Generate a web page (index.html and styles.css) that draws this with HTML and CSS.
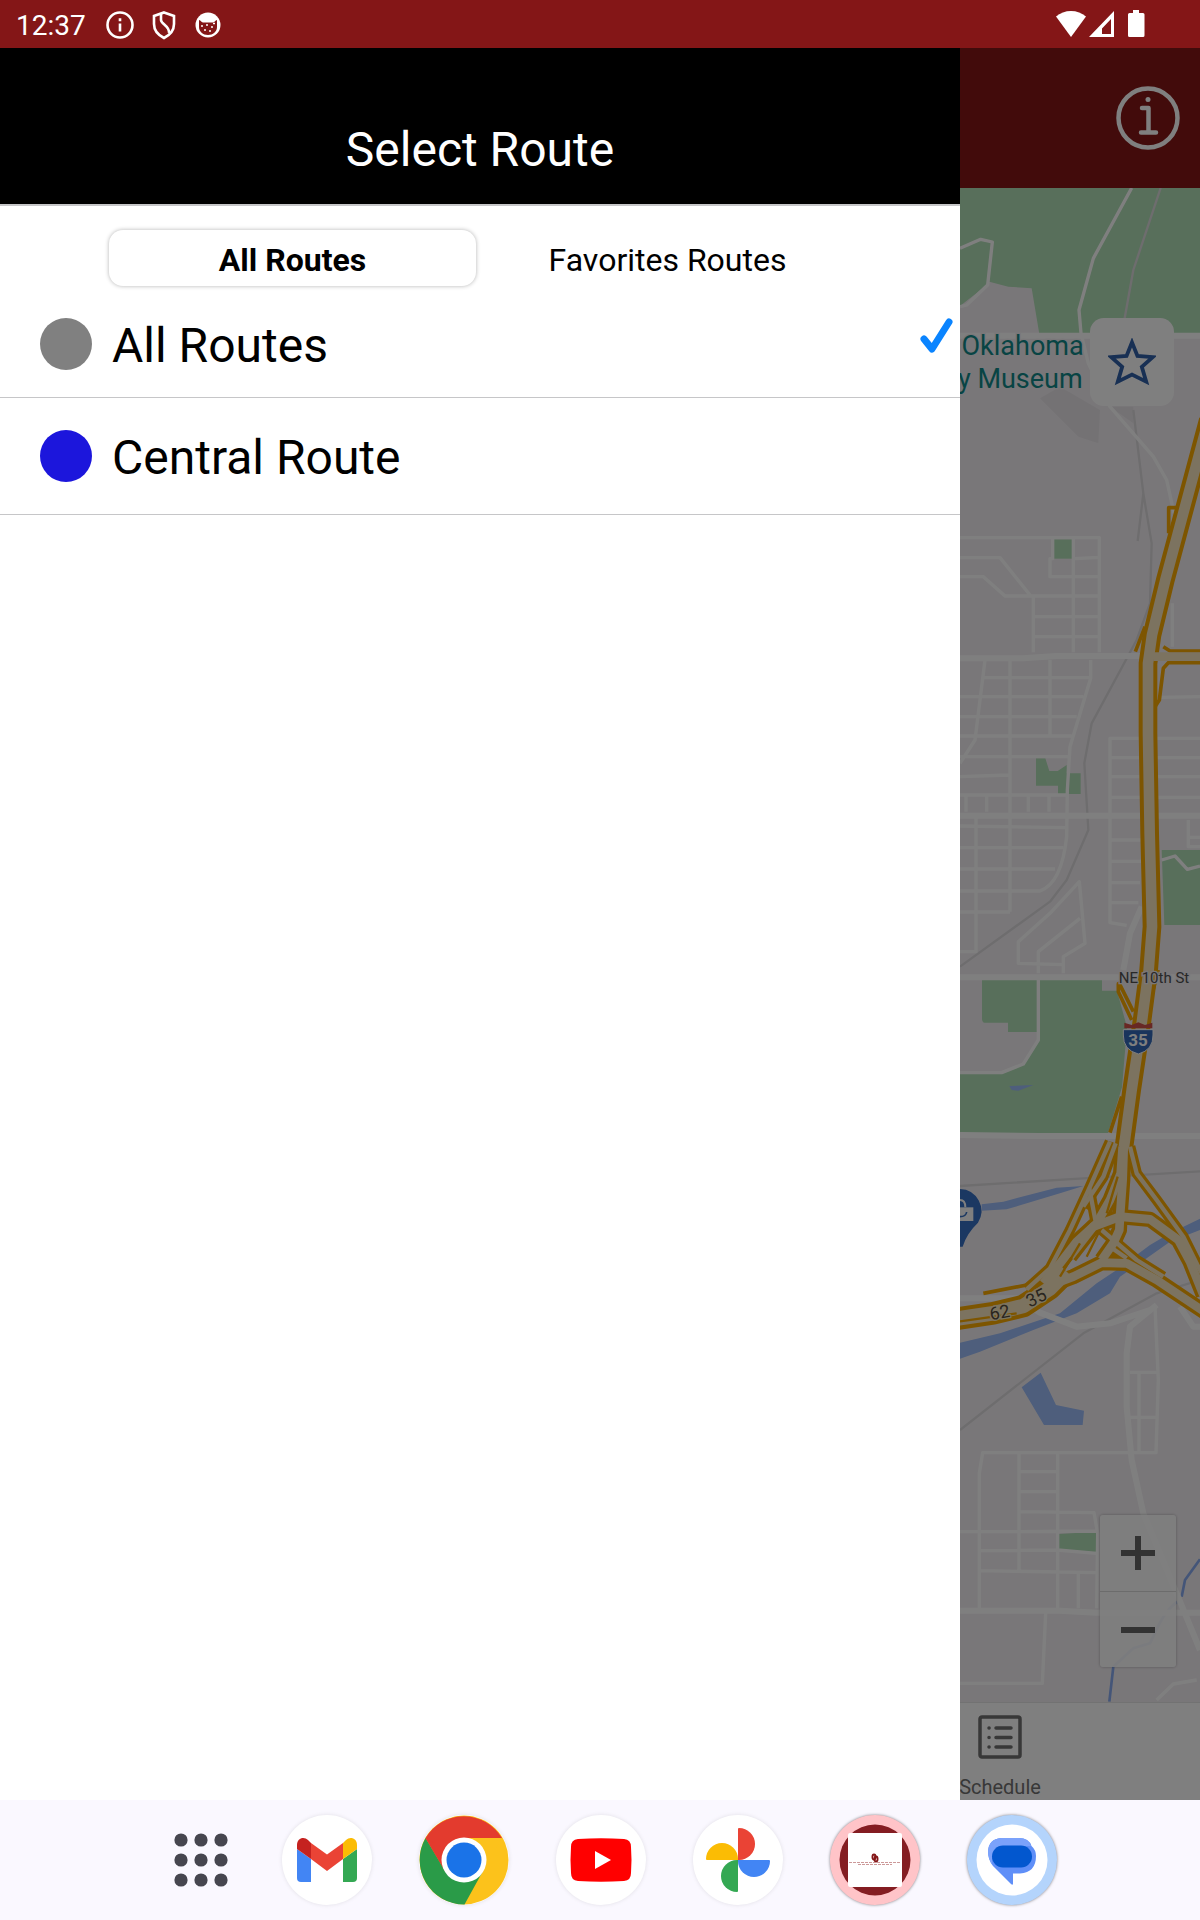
FILE: index.html
```html
<!DOCTYPE html>
<html lang="en">
<head>
  <meta charset="UTF-8">
  <meta name="viewport" content="width=device-width, initial-scale=1">
  <title>Select Route</title>
  <link rel="stylesheet" href="styles.css">
</head>
<body>

  <!-- Status bar -->
  <div class="status-bar">
    <span class="clock">12:37</span>
    <svg class="status-icon" viewBox="0 0 30 30" fill="none" stroke="#fff">
      <circle cx="15" cy="15" r="12.5" stroke-width="2.6"/>
      <path d="M15 13.5v8M15 8.2v3" stroke-width="2.6"/>
    </svg>
    <svg class="status-icon" viewBox="0 0 30 30" fill="none" stroke="#fff" stroke-width="2.6">
      <path d="M15 2.5 25 6v8c0 6.500-4 11-10 14C9 25 5 20.500 5 14V6z"/>
      <path d="M12 4v6c0 4 9 6 8 13"/>
    </svg>
    <svg class="status-icon" viewBox="0 0 30 30">
      <circle cx="15" cy="15" r="12.500" fill="#fff"/>
      <path d="M6 10c2 0 2 2.500 4 2.500h10c2 0 2-2.500 4-2.500v7c0 4.500-4 8-9 8s-9-3.500-9-8z" fill="#841617"/>
      <path d="M8 16h2M13 15h2M18 17h2M11 20h2M16 21h2M20 13.500h2" stroke="#fff" stroke-width="1.400"/>
    </svg>
    <svg class="signal" viewBox="0 0 90 30" fill="#fff">
      <path d="M0 6.500C8-1 22-1 30 6.500L15 27z"/>
      <path d="M58 1v26H33zM55 9 46 18.500V24h9z" fill-rule="evenodd"/>
      <path d="M77 0h6v3h4q1.500 0 1.500 1.500v21q0 1.500-1.500 1.500H73.500q-1.500 0-1.500-1.500v-21Q72 3 73.500 3H77z"/>
    </svg>
  </div>

  <div class="stage">

    <!-- Map screen, under the drawer -->
    <main class="screen">
      <header class="app-header">
        <button class="info-btn" aria-label="Info">
          <svg viewBox="0 0 64 64" fill="none" stroke="#fff" stroke-linecap="round" stroke-linejoin="round" stroke-width="4.500">
            <circle cx="32" cy="32" r="29.500"/>
            <path d="M26 22h6.500v24M25 46.500h15"/>
            <circle cx="32" cy="13.500" r="2.500" fill="#fff" stroke="none"/>
          </svg>
        </button>
      </header>

      <div class="map">
        <svg class="map-canvas" viewBox="30 24 720 4542">
          <defs>
            <g id="highway">
              <path d="M775 720 646 1200 606 1365 594 1450 594 1660 599 1960 606 2240 596 2370 575 2530 545 2730 522 2900"/>
            </g>
            <g id="branches">
              <path d="M522 2880 518 3000 510 3110 508 3150 490 3190 455 3240"/>
              <path d="M518 2900 512 2980 480 3060 440 3130 380 3185 330 3250 280 3310"/>
              <path d="M360 3230 430 3140 510 3110 600 3118 685 3180 720 3245 760 3345"/>
              <path d="M290 3320 370 3290 455 3248 530 3250 620 3300 770 3400"/>
            </g>
            <g id="trunk">
              <path d="M20 3416 130 3400 220 3378 300 3325 350 3275"/>
            </g>
            <g id="ramps">
              <path d="M480 2885 420 3020 360 3150 300 3265 230 3328"/>
              <path d="M497 2890 460 2990 400 3080"/>
              <path d="M540 2900 560 2980 620 3060 700 3170 760 3290"/>
              <path d="M418 3025 436 3120M455 3150 560 3240 640 3290M480 3200 530 3235"/>
            </g>
          </defs>

          <!-- Parks -->
          <g class="park">
            <path d="M30 24H750V462H268L245 325 175 320 118 305 108 317 30 378z"/>
            <path d="M308 1078h62v58h-62z"/>
            <path d="M258 1735h28l12 38h25l27-18v25h42v62h-68v-25h-66z"/>
            <path d="M635 2010h115v225H643z"/>
            <path d="M96 2400H456v32h45l30 110-15 180-42 138H30v-178h120l70-30 42-72v-24h-88v-28h-70q-8 0-8-12z"/>
            <path d="M327 4062 440 4055 443 4118 327 4110z"/>
          </g>
          <path class="plain" d="M30 2400H96V2518q0 12 8 12h70v28h88v24L220 2652 150 2682H30z"/>
          <path class="shade" d="M270 655 330 620 450 690 445 790 385 770zM480 680h70v50z"/>

          <!-- Water -->
          <g class="water">
            <path d="M30 3488 150 3460 330 3400 440 3310 500 3270 600 3195 660 3160 750 3116V3150L660 3185 590 3235 510 3290 480 3340 380 3400 250 3450 90 3515 30 3536z"/>
            <path d="M95 3073 160 3065 320 3023 400 3018 330 3040 170 3088 95 3092z"/>
            <path d="M178 2718 250 2715 205 2732 185 2730z"/>
            <path d="M215 3622 272 3578 318 3675 402 3692 398 3735H282z"/>
          </g>
          <path class="creek" d="M750 4138 705 4200 695 4250M490 4460 478 4565"/>
          <path class="creek faint" d="M690 4260C640 4290 620 4350 600 4390L550 4405 490 4460"/>

          <!-- Rail lines -->
          <path class="rail" d="M632 24 550 270 523 420M550 690 580 940 563 1083M580 940 605 1090 600 1270 560 1380 425 1630 403 1750 415 1950 350 2100 300 2165 30 2360M30 3018 400 2995 750 2974M750 3300 620 3340 400 3460 30 3750"/>

          <!-- Streets -->
          <path class="road" d="M30 205 92 178 127 186 113 315 50 375 30 380M545 24 430 235 387 390 393 460 415 550 480 680 610 830 650 900 672 1000"/>
          <g class="street">
            <path d="M30 1073H448V1417M308 1078V1136H300V1190H448M30 1133H150L240 1245M370 1078V1417M375 1136 448 1132M30 1190H100L165 1248H448M250 1248V1417M250 1310H448M250 1370H448M667 1270V1400"/>
            <path d="M105 1440 75 1680 30 1750M180 1440V2195M300 1440V1665M422 1440V1495L360 1700 352 1830 350 1970Q335 2110 270 2133H30M100 1493H422M30 1550H400M30 1610H380M30 1668H365M30 1730H355M30 1790 180 1785M30 1845H352M48 1845V1895M110 1845V1895M235 1845V1895M297 1845V1895M30 1938 350 1943M30 2003H340M30 2067H315M30 2196H180M78 1910V2315H30"/>
            <path d="M750 1550 630 1552M750 1675H480V2228L530 2236M480 1733H750M480 1790H750M480 1852H750M480 1980H575M480 2044H575M480 2108H570M480 2168H565M715 1920V2000H750M715 1972H750"/>
            <path d="M265 2380V2315L390 2215M340 2380V2330L405 2290 388 2105 300 2200 205 2285V2350L340 2354"/>
            <path d="M615 3380 625 3600 618 3818H98L88 3880V4285M540 3577H625M567 3577V3818M540 3712H625M207 3818V4170M323 3818V4285M207 3875H323M207 3935H323M207 3995 432 3998 443 4060 440 4285M30 4055H207L440 4053M88 4112 323 4110 440 4120M88 4172 440 4178M385 4178V4285M287 4300 277 4510H30M620 4560 670 4512 740 4500"/>
          </g>
          <path class="road" d="M265 2385V2580L220 2652 155 2678H30M635 2040 675 2028 712 2068 750 2058"/>
          <path class="avenue" d="M30 467H420M670 467H750M30 1435H220L320 1428H575M30 1907H750M30 2392H750M30 2865 270 2868H750M575 2180 540 2260 520 2370M30 3355H200L270 3398 380 3440 480 3430 600 3390M620 3375 540 3440 530 3520V3680L545 3840 580 4000 680 4240 750 4410M690 3380 730 3440H750M30 4292H330L440 4298H750"/>

          <!-- Highways: casing first, then the fill -->
          <g class="casing">
            <path d="M680 983H656V1060M585 1340 556 1415M640 1400 660 1413H760M760 1448H655L640 1465 628 1560 615 1580" class="ramp"/>
            <path d="M505 2405 550 2495M505 2410V2435L545 2520M625 2370 600 2465M515 2750 480 2858M100 3340 230 3315 300 3260" class="ramp"/>
            <use href="#ramps" class="ramp-wide"/>
            <use href="#branches" class="branch"/>
            <use href="#trunk" class="trunk"/>
            <use href="#highway" class="main"/>
          </g>
          <g class="fill">
            <path d="M610 1430H770" class="link"/>
            <use href="#ramps" class="ramp-wide"/>
            <use href="#branches" class="branch"/>
            <use href="#trunk" class="trunk"/>
            <use href="#highway" class="main"/>
          </g>
          <path class="median" d="M503 2990 470 3100M390 3190 330 3290M450 3150 410 3230M30 3424 200 3400"/>

          <!-- Interstate shield -->
          <path d="M523 2528 545 2535 565 2527 585 2535 607 2528V2545H523z" fill="#d05048"/>
          <path d="M520 2549H609V2565Q610 2610 565 2622 519 2610 520 2565z" fill="#3468b8" stroke="#fff" stroke-width="3"/>
          <text class="shield-text" x="564" y="2598">35</text>

          <!-- Shopping pin -->
          <path d="M30 3027A66 66 0 0 1 84 3128Q50 3160 38 3200H30z" fill="#3670c4"/>
          <path d="M30 3082H70V3123H30z" fill="#fff"/>
          <path d="M30 3060Q46 3060 46 3082" fill="none" stroke="#fff" stroke-width="6"/>
          <path d="M30 3110Q48 3110 50 3096" fill="none" stroke="#3670c4" stroke-width="5"/>

          <!-- Labels -->
          <text class="place" x="401" y="525">Oklahoma</text>
          <text class="place" x="398" y="624">y Museum</text>
          <text class="street-name" x="612" y="2410">NE 10th St</text>
          <text class="route-no" x="149" y="3416" transform="rotate(-10 149 3396)">62</text>
          <text class="route-no" x="258" y="3372" transform="rotate(-26 258 3352)">35</text>
        </svg>

        <button class="favorite-btn" aria-label="Favorite">
          <svg viewBox="0 0 44 44" fill="none" stroke="#3060a8" stroke-width="3.500">
            <path d="M22 4 27 16.500 41 17.500 31 26.500 35 40 22 33.500 9 40 13 26.500 3 17.500 17 16.500z"/>
          </svg>
        </button>

        <div class="zoom">
          <button aria-label="Zoom in">
            <svg viewBox="0 0 34 34"><path d="M17 0v34M0 17h34"/></svg>
          </button>
          <button aria-label="Zoom out">
            <svg viewBox="0 0 34 34"><path d="M0 17h34"/></svg>
          </button>
        </div>
      </div>

      <nav class="tab-bar">
        <a class="tab" href="#schedule">
          <svg viewBox="0 0 44 44" fill="none" stroke="#707070" stroke-width="3.500" stroke-linecap="round">
            <rect x="2" y="2" width="40" height="40" rx="2"/>
            <path d="M18 13h15M18 22.500h15M18 32h15M11 13h.1M11 22.500h.1M11 32h.1"/>
          </svg>
          Schedule
        </a>
      </nav>
    </main>

    <div class="scrim"></div>

    <!-- Route drawer -->
    <aside class="drawer">
      <h1>Select Route</h1>
      <div class="segments">
        <button class="segment active">All Routes</button>
        <button class="segment">Favorites Routes</button>
      </div>
      <ul class="routes">
        <li class="route">
          <span class="dot gray"></span>
          <span class="route-name">All Routes</span>
          <svg class="check" viewBox="0 0 34 36" fill="none" stroke="#0a84ff" stroke-width="7" stroke-linecap="round" stroke-linejoin="round">
            <path d="M5 21 13 31 30 4"/>
          </svg>
        </li>
        <li class="route">
          <span class="dot blue"></span>
          <span class="route-name">Central Route</span>
        </li>
      </ul>
    </aside>
  </div>

  <!-- Taskbar -->
  <nav class="dock">
    <button class="all-apps" aria-label="All apps">
      <svg viewBox="0 0 54 54" fill="#46464f">
        <circle cx="7" cy="7" r="6.600"/><circle cx="27" cy="7" r="6.600"/><circle cx="47" cy="7" r="6.600"/>
        <circle cx="7" cy="27" r="6.600"/><circle cx="27" cy="27" r="6.600"/><circle cx="47" cy="27" r="6.600"/>
        <circle cx="7" cy="47" r="6.600"/><circle cx="27" cy="47" r="6.600"/><circle cx="47" cy="47" r="6.600"/>
      </svg>
    </button>
    <button class="app" aria-label="Gmail">
      <svg viewBox="0 0 90 90">
        <path d="M15 34 29 44V67H19q-4 0-4-4z" fill="#4285f4"/>
        <path d="M75 34 61 44V67H71q4 0 4-4z" fill="#34a853"/>
        <path d="M29 28 45 39.500 61 28V44L45 56 29 44z" fill="#ea4335"/>
        <path d="M15 30c0-7 7-9 11-5l3 3v16L15 34z" fill="#c5221f"/>
        <path d="M75 30c0-7-7-9-11-5l-3 3v16l14-10z" fill="#fbbc04"/>
      </svg>
    </button>
    <button class="app" aria-label="Chrome">
      <svg viewBox="0 0 90 90">
        <circle cx="45" cy="45" r="44.500" fill="#fcc21b"/>
        <path d="M45 45 26 56 6.500 23A44.500 44.500 0 0 1 83 23z" fill="#e33b2e"/>
        <path d="M6.500 23A44.500 44.500 0 0 0 45.500 89.500L64 56 45 45 26 56z" fill="#2a9b48"/>
        <path d="M6.500 23 26 56 45 45z" fill="#e33b2e"/>
        <path d="M45 23H83L64 56 45 45z" fill="#fcc21b"/>
        <circle cx="45" cy="45" r="22.500" fill="#fff"/>
        <circle cx="45" cy="45" r="17.500" fill="#1a73e8"/>
      </svg>
    </button>
    <button class="app" aria-label="YouTube">
      <svg viewBox="0 0 90 90">
        <path d="M22 24Q45 22.500 68 24 75 24.500 75 32 76 45 75 58 75 65.500 68 66 45 67.500 22 66 15 65.500 15 58 14 45 15 32 15 24.500 22 24z" fill="#f00"/>
        <path d="M39 36v18l16-9z" fill="#fff"/>
      </svg>
    </button>
    <button class="app" aria-label="Photos">
      <svg viewBox="0 0 90 90">
        <path d="M45 45V14q0-1 1-1a16 16 0 0 1 0 32z" fill="#ea4335"/>
        <path d="M45 45H76q1 0 1 1a16 16 0 0 1-32 0z" fill="#4285f4"/>
        <path d="M45 45V76q0 1-1 1a16 16 0 0 1 0-32z" fill="#34a853"/>
        <path d="M45 45H14q-1 0-1-1a16 16 0 0 1 32 0z" fill="#fbbc04"/>
      </svg>
    </button>
    <button class="app ringed pink" aria-label="Route tracker">
      <svg viewBox="0 0 90 90">
        <circle cx="45" cy="45" r="35.500" fill="#841d22"/>
        <rect x="18" y="18" width="54" height="54" rx="2" fill="#fff"/>
        <g fill="none" stroke="#841617" stroke-width="1.800">
          <ellipse cx="44" cy="42" rx="1.600" ry="2.500"/>
          <ellipse cx="46" cy="44" rx="1.600" ry="2.500"/>
        </g>
        <path d="M19 47.500h52M28 49.500h34" stroke="#c99" stroke-width="1" stroke-dasharray="3 1"/>
      </svg>
    </button>
    <button class="app ringed sky" aria-label="Messages">
      <svg viewBox="0 0 90 90">
        <circle cx="45" cy="45" r="35.500" fill="#fff"/>
        <path d="M34 23H52Q62 23 64.500 31 69 35 69 41 69 57.500 53 58.500H46V69Q45.500 70.500 44 69L26 51Q21 45 21 36 22 24 34 23z" fill="#5f8ff8"/>
        <path d="M34 23H52Q61 23 64 31H36Q26 32 25 42V49Q21 44 21 36 22 24 34 23z" fill="#7ba2fb"/>
        <rect x="25" y="30.500" width="40" height="22" rx="11" fill="#0257cf"/>
      </svg>
    </button>
  </nav>

</body>
</html>
```

FILE: styles.css
```css
* {
  box-sizing: border-box;
}
body {
  margin: 0;
  min-height: 100vh;
  display: flex;
  flex-direction: column;
  font-family: Roboto, Arial, sans-serif;
  color: #000;
  background: #fff;
}
button {
  padding: 0;
  border: none;
  background: none;
  font: inherit;
  color: inherit;
  cursor: pointer;
}
svg {
  display: block;
}

/* Status bar */
.status-bar {
  display: flex;
  align-items: center;
  gap: 14px;
  height: 48px;
  padding: 2px 54px 0 16px;
  background: #841617;
  color: #fff;
}
.clock {
  margin-right: 5px;
  font-size: 28px;
}
.status-icon {
  width: 30px;
  height: 30px;
}
.signal {
  width: 90px;
  height: 30px;
  margin-left: auto;
}

/* Map screen */
.stage {
  position: relative;
  flex: 1;
  display: flex;
}
.screen {
  flex: 1;
  display: flex;
  flex-direction: column;
}
.app-header {
  display: flex;
  align-items: center;
  justify-content: flex-end;
  height: 140px;
  padding: 0 20px;
  background: #841617;
}
.info-btn {
  width: 64px;
  height: 64px;
}
.map {
  position: relative;
  flex: 1;
  min-height: 800px;
  overflow: hidden;
  background: #f3eff3;
}
.map-canvas {
  position: absolute;
  top: 0;
  right: 0;
  width: 240px;
  height: 1514px;
}
.park {
  fill: #b0deb6;
}
.plain {
  fill: #f3eff3;
}
.shade {
  fill: #e9e5e9;
}
.water {
  fill: #9cbcf8;
}
.creek, .rail, .road, .street, .avenue, .casing, .fill, .median {
  fill: none;
  stroke-linejoin: round;
}
.creek {
  stroke: #88aaf0;
  stroke-width: 8;
}
.creek.faint {
  stroke: #c8d4f4;
}
.rail {
  stroke: #dcdadd;
  stroke-width: 7;
}
.road {
  stroke: #fff;
  stroke-width: 10;
}
.street {
  stroke: #fff;
  stroke-width: 10;
}
.avenue {
  stroke: #fff;
  stroke-width: 18;
}
.casing, .median {
  stroke: #fbaa00;
}
.fill {
  stroke: #f8e6c0;
}
.median { stroke-width: 7; }
.casing .ramp { stroke-width: 11; }
.casing .ramp-wide { stroke-width: 32; }
.casing .branch { stroke-width: 46; }
.casing .main { stroke-width: 56; }
.casing .trunk { stroke-width: 68; }
.fill .link { stroke-width: 26; }
.fill .ramp-wide { stroke-width: 13; }
.fill .branch { stroke-width: 26; }
.fill .main { stroke-width: 32; }
.fill .trunk { stroke-width: 44; }
.place {
  font-size: 81px;
  fill: #108888;
  text-anchor: end;
  stroke: #f3eff3;
  stroke-width: 8;
  paint-order: stroke;
}
.street-name {
  font-size: 45px;
  fill: #505050;
  text-anchor: middle;
  stroke: #f3eff3;
  stroke-width: 8;
  paint-order: stroke;
}
.route-no {
  font-size: 54px;
  fill: #554c40;
  text-anchor: middle;
  stroke: #fbe9bc;
  stroke-width: 8;
  paint-order: stroke;
}
.shield-text {
  font-size: 51px;
  font-weight: bold;
  fill: #fff;
  text-anchor: middle;
}
.favorite-btn {
  position: absolute;
  top: 130px;
  right: 26px;
  display: flex;
  align-items: center;
  justify-content: center;
  width: 84px;
  height: 88px;
  border-radius: 14px;
  background: #fff;
}
.favorite-btn svg {
  width: 48px;
  height: 48px;
}
.zoom {
  position: absolute;
  right: 24px;
  bottom: 35px;
  border-radius: 3px;
  background: rgba(255, 255, 255, 0.8);
  box-shadow: 0 0 3px rgba(0, 0, 0, 0.3);
}
.zoom button {
  display: flex;
  align-items: center;
  justify-content: center;
  width: 76px;
  height: 76px;
}
.zoom button + button {
  border-top: 1px solid #d8d8d8;
}
.zoom svg {
  width: 34px;
  height: 34px;
  stroke: #666;
  stroke-width: 6;
}
.tab-bar {
  display: grid;
  grid-template-columns: repeat(3, 1fr);
  height: 98px;
  border-top: 1px solid #e4e4e4;
  background: #fff;
}
.tab {
  grid-column: 3;
  display: flex;
  flex-direction: column;
  align-items: center;
  justify-content: space-between;
  padding-top: 12px;
  font-size: 20px;
  line-height: 26px;
  color: #707070;
  text-decoration: none;
}
.tab svg {
  width: 44px;
  height: 44px;
}
.scrim {
  position: absolute;
  inset: 0;
  background: rgba(0, 0, 0, 0.5);
}

/* Drawer */
.drawer {
  position: absolute;
  top: 0;
  bottom: 0;
  left: 0;
  width: 80%;
  background: #fff;
}
.drawer h1 {
  margin: 0;
  padding: 74px 0 26px;
  border-bottom: 2px solid #c6c6c8;
  background: #000;
  color: #fff;
  font-size: 48px;
  font-weight: normal;
  line-height: 56px;
  text-align: center;
}
.segments {
  display: flex;
  width: 750px;
  max-width: 100%;
  margin: 20px auto 0;
  padding: 4px 0;
}
.segment {
  flex: 1;
  height: 56px;
  margin: 0 4px;
  padding-top: 3px;
  border-radius: 14px;
  font-size: 32px;
}
.segment.active {
  font-weight: bold;
  background: #fff;
  box-shadow: 0 0 4px rgba(0, 0, 0, 0.3);
}
.routes {
  margin: 0;
  padding: 0;
  list-style: none;
}
.route {
  display: flex;
  align-items: center;
  gap: 20px;
  height: 117px;
  padding: 0 7px 0 40px;
  border-bottom: 1px solid #c6c6c8;
  font-size: 48px;
}
.route:first-child {
  height: 108px;
}
.route-name {
  padding-top: 3px;
}
.dot {
  width: 52px;
  height: 52px;
  border-radius: 50%;
}
.dot.gray {
  background: #808080;
}
.dot.blue {
  background: #1c16dc;
}
.check {
  width: 34px;
  height: 36px;
  margin: 0 0 16px auto;
}

/* Taskbar */
.dock {
  display: flex;
  align-items: center;
  justify-content: center;
  gap: 47px;
  height: 120px;
  background: #faf8ff;
}
.all-apps {
  display: flex;
  justify-content: flex-end;
  width: 84px;
  margin-right: 7px;
}
.all-apps svg {
  width: 54px;
  height: 54px;
}
.app {
  width: 90px;
  height: 90px;
  border-radius: 50%;
  background: #fff;
  box-shadow: 0 0 4px rgba(0, 0, 0, 0.1);
}
.app svg {
  width: 90px;
  height: 90px;
}
.app.ringed {
  box-shadow: 0 0 3px rgba(0, 0, 0, 0.5);
}
.app.pink {
  background: #ffc4c8;
}
.app.sky {
  background: #b4d4fc;
}
```
